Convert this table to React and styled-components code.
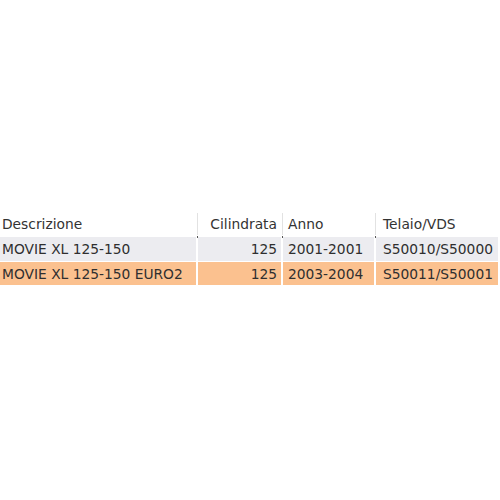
import React from "react";
import styled, { createGlobalStyle } from "styled-components";

const Global = createGlobalStyle`
  html, body { margin: 0; padding: 0; background: #ffffff; }
  body { width: 500px; height: 500px; overflow: hidden; }
`;

const Page = styled.div`
  padding-top: 211px;
  font-family: "DejaVu Sans", Verdana, sans-serif;
  font-size: 13.8px;
  color: #2f2f2f;
`;

const Grid = styled.div`
  display: grid;
  grid-template-columns: 196px 83px 91px 122px;
  column-gap: 2px;
  width: 500px;
`;

const HeadCell = styled.div`
  position: relative;
  height: 26px;
  display: flex;
  align-items: center;
  padding: 0 ${(p) => (p.$right ? "4px" : "0")} 0 ${(p) => (p.$pl || 2)}px;
  justify-content: ${(p) => (p.$right ? "flex-end" : "flex-start")};
  color: #333;
  white-space: nowrap;
  &::after {
    content: "";
    display: ${(p) => (p.$sep ? "block" : "none")};
    position: absolute;
    right: -2px;
    top: 2px;
    bottom: 2px;
    width: 1px;
    background: #e2e2e2;
  }
  &::before {
    content: "";
    display: ${(p) => (p.$sep ? "block" : "none")};
    position: absolute;
    right: -2px;
    bottom: -1px;
    width: 1px;
    height: 2px;
    background: #555;
  }
`;

const Cell = styled.div`
  height: ${(p) => p.$h}px;
  display: flex;
  align-items: center;
  justify-content: ${(p) => (p.$right ? "flex-end" : "flex-start")};
  padding: 0 ${(p) => (p.$right ? "4px" : "0")} 0 ${(p) => (p.$pl || 2)}px;
  background: ${(p) => (p.$sel ? "#fbc18f" : "#ececf0")};
  white-space: nowrap;
  overflow: hidden;
`;

const Body = styled.div`
  display: grid;
  row-gap: 1px;
`;

const columns = [
  { key: "d", label: "Descrizione", pl: 2 },
  { key: "c", label: "Cilindrata", right: true },
  { key: "a", label: "Anno", pl: 5 },
  { key: "t", label: "Telaio/VDS", pl: 7 },
];

const rows = [
  { d: "MOVIE XL 125-150", c: "125", a: "2001-2001", t: "S50010/S50000", sel: false, h: 24 },
  { d: "MOVIE XL 125-150 EURO2", c: "125", a: "2003-2004", t: "S50011/S50001", sel: true, h: 23 },
];

export default function App() {
  return (
    <>
      <Global />
      <Page>
        <Grid>
          {columns.map((c, i) => (
            <HeadCell key={c.key} $right={c.right} $pl={c.pl} $sep={i < 3}>
              {c.label}
            </HeadCell>
          ))}
        </Grid>
        <Body>
          {rows.map((r, ri) => (
            <Grid key={ri}>
              {columns.map((c) => (
                <Cell key={c.key} $right={c.right} $pl={c.pl} $sel={r.sel} $h={r.h}>
                  {r[c.key]}
                </Cell>
              ))}
            </Grid>
          ))}
        </Body>
      </Page>
    </>
  );
}
